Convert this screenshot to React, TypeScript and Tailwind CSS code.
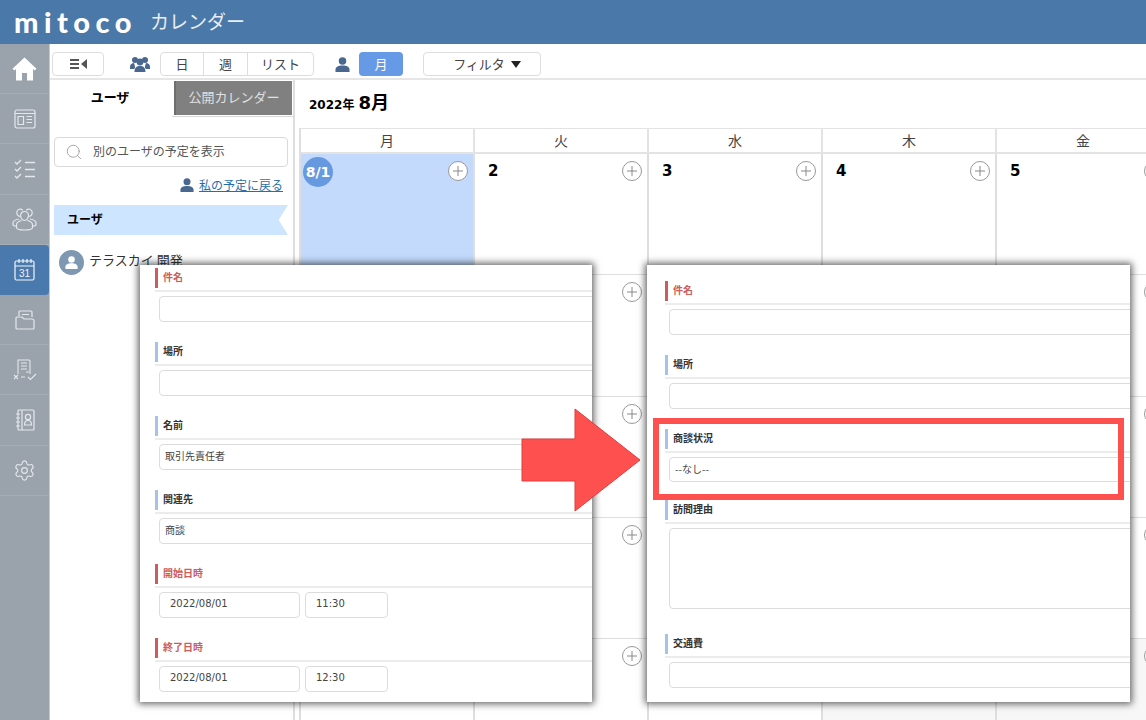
import React from 'react';
import { Search, Settings } from 'lucide-react';

const jp = "font-['Noto_Sans_CJK_JP','Noto_Sans',sans-serif]";
const latin = "font-['DejaVu_Sans','Noto_Sans_CJK_JP',sans-serif]";

const HomeIcon = () => (
  <svg width="25" height="24" viewBox="0 0 25 24" fill="#fff">
    <path d="M12.500 0.500 0.500 11.800 2.300 13.500 4 12v11.500h6V16h5v7.500h6V12l1.700 1.500 1.800-1.700z" />
  </svg>
);

const PaperIcon = () => (
  <svg width="22" height="20" viewBox="0 0 22 20" fill="none" stroke="#e4e8ec" strokeWidth="1.2">
    <rect x="1" y="1" width="20" height="18" rx="2" />
    <path d="M1 4.500h20M4 7.500h5.500v8H4zM12.500 7.500h5.500M12.500 10.500h5.500M12.500 13.500h5.500" />
  </svg>
);

const TasksIcon = () => (
  <svg width="22" height="20" viewBox="0 0 22 20" fill="none" stroke="#e4e8ec" strokeWidth="1.3">
    <path d="M1 3l2 2 4-4M1 10l2 2 4-4M1 17l2 2 4-4M11 3.500h10M11 10.500h10M11 17.500h10" />
  </svg>
);

const GroupIcon = () => (
  <svg width="25" height="23" viewBox="0 0 25 23" fill="none" stroke="#e4e8ec" strokeWidth="1.2">
    <path d="M8 8.500C6 8 4.800 6 4.800 4.500a3.400 3.400 0 0 1 6-2.200M17 8.500c2-.5 3.200-2.500 3.200-4a3.400 3.400 0 0 0-6-2.200" />
    <path d="M7 11c-3 .5-6 1.500-6 4v1.500c0 1 1 1.500 3 1.500M18 11c3 .5 6 1.500 6 4v1.500c0 1-1 1.500-3 1.500" />
    <path d="M12.500 3.500c2.500 0 4 2 4 4s-1.500 5-4 5-4-3-4-5 1.500-4 4-4zM9.500 12.500c-3 .7-5 2-5 4.500v2.500c0 1.500 3 2.500 8 2.500s8-1 8-2.500V17c0-2.500-2-3.800-5-4.500" />
  </svg>
);

const CalendarIcon = () => (
  <svg width="22" height="24" viewBox="0 0 22 24" fill="none" stroke="#f1f5f9" strokeWidth="1.2">
    <rect x="1" y="3" width="19" height="19" rx="1.500" />
    <path d="M1 8h19M5 1v4M9 1v4M13 1v4M17 1v4" />
    <text x="10.500" y="19" textAnchor="middle" fontSize="10" fill="#f1f5f9" stroke="none" fontFamily="Liberation Sans">31</text>
  </svg>
);

const FolderIcon = () => (
  <svg width="20" height="20" viewBox="0 0 20 20" fill="none" stroke="#e4e8ec" strokeWidth="1.2">
    <path d="M4 6V2a1 1 0 0 1 1-1h11a1 1 0 0 1 1 1v5M7 4.500h7" />
    <path d="M1 8a1 1 0 0 1 1-1h5l2 2h8a2 2 0 0 1 2 2v7a1 1 0 0 1-1 1H2a1 1 0 0 1-1-1z" />
  </svg>
);

const ReportIcon = () => (
  <svg width="24" height="22" viewBox="0 0 24 22" fill="none" stroke="#e4e8ec" strokeWidth="1.100">
    <path d="M5 15V1h11a1 1 0 0 1 1 1v13M8 4h6M8 7h6M8 10h6M13 13h3" />
    <path d="M1 16l4 4M5 16l-4 4M8 18h4M15 18l2.500 2.500L23 15" />
  </svg>
);

const ContactIcon = () => (
  <svg width="20" height="22" viewBox="0 0 20 22" fill="none" stroke="#e4e8ec" strokeWidth="1.200">
    <rect x="3" y="1" width="16" height="20" rx="1" />
    <path d="M7 1v20M1 5h4M1 9h4M1 13h4M1 17h4" />
    <circle cx="13" cy="8" r="2.600" />
    <path d="M9.500 16c0-6 7-6 7 0z" />
  </svg>
);

const PeopleIcon = () => (
  <svg width="20" height="16" viewBox="0 0 20 16" fill="#4a6790">
    <circle cx="5" cy="4" r="3" />
    <circle cx="15" cy="4" r="3" />
    <circle cx="10" cy="6" r="3.400" />
    <path d="M0 11c0-3 2-4 4-4 1 3 1 3 1 5l-1 1H0zM20 11c0-3-2-4-4-4-1 3-1 3-1 5l1 1h4zM4.500 16c0-5 2.500-6 5.500-6s5.500 1 5.500 6z" />
  </svg>
);

const PersonIcon = ({ size = 15, color = '#4a6790' }: { size?: number; color?: string }) => (
  <svg width={size} height={size} viewBox="0 0 16 16" fill={color}>
    <circle cx="8" cy="4.200" r="4" />
    <path d="M0.500 16v-2.500c0-3 3-4.500 7.500-4.500s7.500 1.500 7.500 4.500V16z" />
  </svg>
);

const navItems = [
  <HomeIcon />,
  <PaperIcon />,
  <TasksIcon />,
  <GroupIcon />,
  <CalendarIcon />,
  <FolderIcon />,
  <ReportIcon />,
  <ContactIcon />,
  <Settings size={23} color="#e4e8ec" strokeWidth={1.2} />,
];

const Sidebar = () => (
  <div className="w-[50px] shrink-0 bg-[#9aa3ab] border-r border-[#c4c9ce]">
    {navItems.map((icon, i) => (
      <div
        key={i}
        className={`h-[50.200px] flex items-center justify-center ${
          i === 4 ? 'bg-[#4a7aad] rounded-r-sm' : 'border-b border-[#a5adb4]'
        }`}
      >
        {icon}
      </div>
    ))}
  </div>
);

const Toolbar = () => (
  <div className={`h-[36px] shrink-0 flex items-center border-b-2 border-[#e6e6e6] pl-[2px] pt-[6px] text-[13px] text-[#444] ${jp}`}>
    <div className="w-[52px] h-[24px] border border-[#ddd] rounded flex items-center justify-center gap-[2px]">
      <div className="flex flex-col gap-[2px]">
        <div className="w-[9px] h-[2px] bg-[#555]" />
        <div className="w-[9px] h-[2px] bg-[#555]" />
        <div className="w-[9px] h-[2px] bg-[#555]" />
      </div>
      <div className="w-0 h-0 border-y-[5px] border-y-transparent border-r-[6px] border-r-[#555]" />
    </div>
    <div className="ml-[26px] w-[30px] flex">
      <PeopleIcon />
    </div>
    <div className="flex h-[24px] border border-[#ddd] rounded">
      <div className="w-[43px] flex items-center justify-center border-r border-[#ddd]">日</div>
      <div className="w-[44px] flex items-center justify-center border-r border-[#ddd]">週</div>
      <div className="w-[65px] flex items-center justify-center">リスト</div>
    </div>
    <div className="ml-[21px] w-[24px] flex">
      <PersonIcon />
    </div>
    <div className="w-[44px] h-[24px] bg-[#6699e6] text-white rounded flex items-center justify-center">月</div>
    <div className="ml-[20px] w-[118px] h-[24px] border border-[#ddd] rounded pl-[10px] flex items-center justify-center gap-[6px]">
      フィルタ
      <div className="w-0 h-0 border-x-[5.500px] border-x-transparent border-t-[7px] border-t-[#222]" />
    </div>
  </div>
);

const UserPanel = () => (
  <div className={`w-[245px] shrink-0 border-r-2 border-[#dedede] ${jp}`}>
    <div className="h-[36px] flex">
      <div className="w-[120px] pt-[7px] text-center text-[13px] font-bold text-black">ユーザ</div>
      <div className="ml-[4px] mt-[1px] w-[118px] h-[34px] bg-[#808080] border-l-2 border-[#6e6e6e] text-[#e0e0e0] text-[13px] pb-[3px] flex items-center justify-center">
        公開カレンダー
      </div>
    </div>
    <div className="ml-[122px] border-t border-[#d8d8d8]" />
    <div className="mx-[4px] mt-[20px] h-[30px] w-[234px] border border-[#d9d9d9] rounded flex items-center pl-[10px] gap-[10px] text-[12px] text-[#555]">
      <Search size={18} color="#a0a0a0" strokeWidth={1.2} />
      <span className="pb-[2px]">別のユーザの予定を表示</span>
    </div>
    <div className="w-[233px] mt-[9px] h-[18px] flex items-center justify-end gap-[5px] text-[12px] text-[#2a6ea8] underline">
      <PersonIcon size={14} />
      私の予定に戻る
    </div>
    <div className="ml-[4px] mt-[11px] w-[234px] h-[30px] bg-[#cde5fe] [clip-path:polygon(0_0,100%_0,96%_50%,100%_100%,0_100%)] flex items-center pl-[13px] pb-[2px] text-[12px] font-bold text-black">
      ユーザ
    </div>
    <div className="ml-[9px] mt-[15px] flex items-center gap-[5px] text-[13px] text-[#333]">
      <div className="w-[25px] h-[25px] rounded-full bg-[#7f98b2] flex items-center justify-center">
        <PersonIcon size={13} color="#fff" />
      </div>
      <span className="pb-[5px]">テラスカイ 開発</span>
    </div>
  </div>
);

const PlusButton = () => (
  <div className="absolute top-[7px] right-[5px] w-[20px] h-[20px] rounded-full border border-[#999] bg-white flex items-center justify-center">
    <svg width="12" height="12" viewBox="0 0 12 12" stroke="#888" strokeWidth="1">
      <path d="M6 1v10M1 6h10" />
    </svg>
  </div>
);

const weekdays = ['月', '火', '水', '木', '金'];

const Calendar = () => (
  <div className="flex-1 min-w-0 pl-[4px] overflow-hidden">
    <div className={`h-[48px] flex items-baseline pl-[10px] pt-[9px] font-bold text-black ${latin}`}>
      <span className="text-[12px]">2022年</span>
      <span className="ml-[4px] text-[18px]">8月</span>
    </div>
    <div className="w-[872px] grid grid-cols-[repeat(5,174px)] border-l-2 border-[#dedede]">
      {weekdays.map((d) => (
        <div
          key={d}
          className={`h-[26px] border-t border-b-2 border-r-2 border-[#e3e3e3] flex items-center justify-center text-[14px] text-[#444] ${jp}`}
        >
          {d}
        </div>
      ))}
      {Array.from({ length: 25 }).map((_, i) => (
        <div
          key={i}
          className={`relative h-[121.300px] border-r-2 border-b border-[#dedede] ${
            i === 0 ? 'bg-[#c3dafc]' : i >= 23 ? 'bg-[#f7f7f7]' : ''
          }`}
        >
          {i === 0 && (
            <div className={`absolute left-[2px] top-[3px] w-[30px] h-[30px] rounded-full bg-[#6699e0] text-white text-[14px] font-bold flex items-center justify-center ${latin}`}>
              8/1
            </div>
          )}
          {i > 0 && i < 5 && (
            <div className={`absolute left-[13px] top-[6px] text-[15px] font-bold text-black ${latin}`}>{i + 1}</div>
          )}
          <PlusButton />
        </div>
      ))}
    </div>
  </div>
);

const FieldLabel = ({ label, required }: { label: string; required?: boolean }) => (
  <div className={`-ml-[4px] border-b-2 border-[#ececec] pb-[2px] ${jp}`}>
    <div
      className={`h-[20px] border-l-[3px] pl-[5px] pb-[3px] flex items-center text-[10px] font-bold ${
        required ? 'border-[#cd5c5c] text-[#cd5c5c]' : 'border-[#a3c4e6] text-[#333]'
      }`}
    >
      {label}
    </div>
  </div>
);

const Input = ({ value, className = '' }: { value?: string; className?: string }) => (
  <div className={`h-[26px] mt-[4px] border border-[#dcdcdc] rounded pb-[3px] flex items-center text-[10px] text-[#444] ${className}`}>
    {value}
  </div>
);

const Field = ({ label, required, value, height }: { label: string; required?: boolean; value?: string; height?: string }) => (
  <div>
    <FieldLabel label={label} required={required} />
    <Input value={value} className={`pl-[5px] -mr-[8px] ${jp} ${height ?? ''}`} />
  </div>
);

const DateField = ({ label, time }: { label: string; time: string }) => (
  <div>
    <FieldLabel label={label} required />
    <div className={`flex gap-[5px] ${latin}`}>
      <Input value="2022/08/01" className="w-[141px] pl-[10px] text-[10.500px]" />
      <Input value={time} className="w-[83px] pl-[10px] text-[10.500px]" />
    </div>
  </div>
);

const panelClass =
  'absolute bg-white overflow-hidden flex flex-col shadow-[0_0_7px_2px_rgba(0,0,0,0.6)]';

const Arrow = () => (
  <svg className="absolute left-[521px] top-[408px]" width="122" height="104" viewBox="0 0 122 104">
    <path d="M1 31h53V1l65 51-65 51V73H1z" fill="#ff5050" stroke="#e03c3c" strokeWidth="1" />
  </svg>
);

const App = () => {
  return (
    <div className="relative w-[1146px] h-[720px] overflow-hidden bg-white flex flex-col">
      {/* Header */}
      <div className={`h-[44px] shrink-0 bg-[#4a78a8] flex items-center pl-[14px] ${jp}`}>
        <span className="w-[136px] font-['Lato',sans-serif] font-black text-[29px] tracking-[5.500px] text-white leading-none pb-[1px]">
          mitoco
        </span>
        <span className="text-[19px] text-[#e8eef5] pb-[2px]">カレンダー</span>
      </div>

      <div className="flex flex-1 min-h-0">
        <Sidebar />
        <div className="flex-1 min-w-0 flex flex-col">
          <Toolbar />
          <div className="flex flex-1 min-h-0">
            <UserPanel />
            <Calendar />
          </div>
        </div>
      </div>

      {/* 左のスクリーンショット */}
      <div className={`${panelClass} left-[140px] top-[265px] w-[452px] h-[437px] pl-[19px] pt-[3px] gap-[20px]`}>
        <Field label="件名" required />
        <Field label="場所" />
        <Field label="名前" value="取引先責任者" />
        <Field label="関連先" value="商談" />
        <DateField label="開始日時" time="11:30" />
        <DateField label="終了日時" time="12:30" />
      </div>

      {/* 右のスクリーンショット */}
      <div className={`${panelClass} left-[647px] top-[265px] w-[483px] h-[437px] pl-[22px] pt-[16px]`}>
        <div className="flex flex-col gap-[20px]">
          <Field label="件名" required />
          <Field label="場所" />
          <Field label="商談状況" value="--なし--" height="!h-[25px]" />
        </div>
        <div className="mt-[18px]">
          <Field label="訪問理由" height="h-[81px]" />
        </div>
        <div className="mt-[25px]">
          <Field label="交通費" />
        </div>
      </div>

      {/* 強調の枠と矢印 */}
      <div className="absolute left-[653px] top-[418px] w-[471px] h-[82px] border-[6px] border-[#ff5050]" />
      <Arrow />
    </div>
  );
};

export default App;
